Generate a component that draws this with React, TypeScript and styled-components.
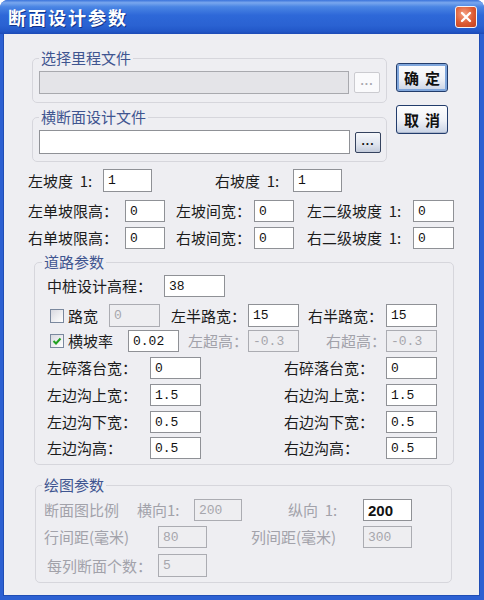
import React from "react";
import styled, { createGlobalStyle } from "styled-components";

const GlobalStyle = createGlobalStyle`
  html, body {
    margin: 0;
    padding: 0;
    background: #ffffff;
  }
  body {
    font-family: "Noto Sans CJK SC", "Noto Sans", sans-serif;
  }
`;

const Window = styled.div`
  width: 484px;
  height: 600px;
  display: flex;
  flex-direction: column;
  background: #2c60d2;
  border-radius: 8px 8px 0 0;
  overflow: hidden;
`;

const TitleBar = styled.div`
  height: 34px;
  flex: none;
  display: flex;
  align-items: center;
  justify-content: space-between;
  padding: 0 7px 0 8px;
  background: linear-gradient(
    180deg,
    #3a73db 0%,
    #79a7ee 8%,
    #4a85e4 20%,
    #2e68d8 45%,
    #2a62d2 75%,
    #2257c8 92%,
    #1c4ab6 100%
  );
`;

const Title = styled.div`
  color: #ffffff;
  font-size: 18px;
  font-weight: bold;
  letter-spacing: 2px;
  text-shadow: 1px 1px 0 #13348a;
`;

const CloseButton = styled.div`
  width: 22px;
  height: 22px;
  box-sizing: border-box;
  border: 1px solid #f4f4f8;
  border-radius: 3px;
  background: radial-gradient(circle at 40% 35%, #f5a183, #dc5a32 55%, #c2401e);
  display: flex;
  align-items: center;
  justify-content: center;
`;

const Body = styled.div`
  flex: 1;
  margin: 0 4px 4px 3px;
  border: 1px solid #1f4db5;
  border-top: none;
  background: #eeeef2;
  padding-top: 16px;
`;

const TopSection = styled.div`
  display: flex;
  padding-left: 28px;
`;

const FileColumn = styled.div`
  width: 355px;
  display: flex;
  flex-direction: column;
`;

const ButtonColumn = styled.div`
  margin-left: 9px;
  padding-top: 13px;
  display: flex;
  flex-direction: column;
  gap: 13px;
`;

const Group = styled.fieldset<{ $w?: number; $ml?: number; $mt?: number }>`
  margin: ${(p) => p.$mt ?? 0}px 0 0 ${(p) => p.$ml ?? 0}px;
  padding: 0;
  width: ${(p) => (p.$w ? `${p.$w}px` : "auto")};
  box-sizing: border-box;
  min-inline-size: 0;
  border: 1px solid #d6d6dc;
  border-radius: 5px;
`;

const Legend = styled.legend<{ $ml: number }>`
  margin-left: ${(p) => p.$ml}px;
  padding: 0 2px;
  font-size: 15px;
  line-height: 16px;
  color: #3f5590;
`;

const GroupBody = styled.div<{ $pad: string }>`
  padding: ${(p) => p.$pad};
`;

const Row = styled.div<{ $mt?: number }>`
  display: flex;
  align-items: center;
  margin-top: ${(p) => p.$mt ?? 0}px;
`;

const OuterRows = styled.div`
  padding-left: 24px;
`;

const Lbl = styled.span<{ $w: number; $ml?: number; $dim?: boolean }>`
  flex: none;
  width: ${(p) => p.$w}px;
  margin-left: ${(p) => p.$ml ?? 0}px;
  font-size: 15px;
  line-height: 22px;
  white-space: pre;
  color: ${(p) => (p.$dim ? "#a2a2aa" : "#1c1c1c")};
`;

const Input = styled.input<{ $w: number; $h?: number; $sans?: boolean }>`
  flex: none;
  box-sizing: border-box;
  width: ${(p) => p.$w}px;
  height: ${(p) => p.$h ?? 22}px;
  margin: 0;
  padding: 0 0 0 4px;
  border: 1px solid #8f9196;
  border-radius: 0;
  background: #ffffff;
  color: #111111;
  font-family: ${(p) => (p.$sans ? '"Liberation Sans", Arial, sans-serif' : '"Liberation Mono", monospace')};
  font-size: ${(p) => (p.$sans ? 15 : 13)}px;
  font-weight: ${(p) => (p.$sans ? "bold" : "normal")};
  outline: none;

  &:disabled {
    background: #eeeef1;
    border-color: #abacb2;
    color: #a6a6ac;
  }
`;

const PathInput = styled(Input)`
  &:disabled {
    background: #e4e4e8;
    border-color: #a8a9ae;
  }
`;

const Browse = styled.button<{ $on?: boolean }>`
  flex: none;
  width: 26px;
  height: 21px;
  margin-left: 5px;
  padding: 0 0 5px;
  box-sizing: border-box;
  border: 1px solid ${(p) => (p.$on ? "#34425e" : "#cbcbd0")};
  border-radius: 2px;
  background: ${(p) => (p.$on ? "linear-gradient(180deg, #f6f7fa, #dfe4ee 60%, #c3cbdb)" : "#fafafc")};
  color: ${(p) => (p.$on ? "#111111" : "#a8a8ae")};
  font-family: "Liberation Sans", Arial, sans-serif;
  font-size: 12px;
  font-weight: bold;
  letter-spacing: 1px;
  line-height: 1;
  display: flex;
  align-items: flex-end;
  justify-content: center;
`;

const DialogButton = styled.button<{ $default?: boolean }>`
  width: 52px;
  height: 29px;
  padding: 0 0 0 6px;
  box-sizing: border-box;
  border: 1px solid #223c6c;
  border-radius: 3px;
  background: linear-gradient(180deg, #fdfdfe, #eef1f7 55%, #c8d2e5);
  box-shadow: ${(p) => (p.$default ? "inset 0 0 0 2px #7fa6dc" : "inset 0 -1px 0 #aab6cc")};
  color: #111111;
  font-family: "Noto Sans CJK SC", sans-serif;
  font-size: 15px;
  font-weight: bold;
  letter-spacing: 6px;
  cursor: pointer;
`;

const CheckLabel = styled.label<{ $w: number }>`
  flex: none;
  width: ${(p) => p.$w}px;
  display: flex;
  align-items: center;
  font-size: 15px;
  line-height: 22px;
  color: #1c1c1c;
`;

const CheckBox = styled.span`
  width: 14px;
  height: 14px;
  box-sizing: border-box;
  margin: 0 4px 0 3px;
  border: 1px solid #7a889e;
  background: linear-gradient(135deg, #d8d9e0, #ffffff);
  display: flex;
  align-items: center;
  justify-content: center;
`;

const Check = ({ on }: { on?: boolean }) => (
  <CheckBox>
    {on && (
      <svg width="10" height="10" viewBox="0 0 10 10">
        <path d="M1.5 5 L4 7.5 L8.5 2.5" fill="none" stroke="#21a121" strokeWidth="2" />
      </svg>
    )}
  </CheckBox>
);

export default function App() {
  return (
    <>
      <GlobalStyle />
      <Window>
        <TitleBar>
          <Title>断面设计参数</Title>
          <CloseButton>
            <svg width="12" height="12" viewBox="0 0 12 12">
              <path d="M2 2 L10 10 M10 2 L2 10" stroke="#ffffff" strokeWidth="2.4" strokeLinecap="round" />
            </svg>
          </CloseButton>
        </TitleBar>
        <Body>
          <TopSection>
            <FileColumn>
              <Group>
                <Legend $ml={6}>选择里程文件</Legend>
                <GroupBody $pad="5px 0 8px 6px">
                  <Row>
                    <PathInput $w={310} $h={23} disabled />
                    <Browse disabled>...</Browse>
                  </Row>
                </GroupBody>
              </Group>
              <Group $mt={6}>
                <Legend $ml={6}>横断面设计文件</Legend>
                <GroupBody $pad="5px 0 7px 6px">
                  <Row>
                    <Input $w={311} $h={24} defaultValue="" />
                    <Browse $on>...</Browse>
                  </Row>
                </GroupBody>
              </Group>
            </FileColumn>
            <ButtonColumn>
              <DialogButton $default>确定</DialogButton>
              <DialogButton>取消</DialogButton>
            </ButtonColumn>
          </TopSection>

          <OuterRows>
            <Row $mt={7}>
              <Lbl $w={75}>左坡度  1:</Lbl>
              <Input $w={49} $h={23} defaultValue="1" />
              <Lbl $w={78} $ml={63}>右坡度  1:</Lbl>
              <Input $w={49} $h={23} defaultValue="1" />
            </Row>
            <Row $mt={8}>
              <Lbl $w={97}>左单坡限高：</Lbl>
              <Input $w={40} defaultValue="0" />
              <Lbl $w={78} $ml={11}>左坡间宽：</Lbl>
              <Input $w={40} defaultValue="0" />
              <Lbl $w={106} $ml={13}>左二级坡度  1:</Lbl>
              <Input $w={41} defaultValue="0" />
            </Row>
            <Row $mt={5}>
              <Lbl $w={97}>右单坡限高：</Lbl>
              <Input $w={40} defaultValue="0" />
              <Lbl $w={78} $ml={11}>右坡间宽：</Lbl>
              <Input $w={40} defaultValue="0" />
              <Lbl $w={106} $ml={13}>右二级坡度  1:</Lbl>
              <Input $w={41} defaultValue="0" />
            </Row>
          </OuterRows>

          <Group $w={420} $ml={30} $mt={5}>
            <Legend $ml={7}>道路参数</Legend>
            <GroupBody $pad="5px 0 5px 12px">
              <Row>
                <Lbl $w={117}>中桩设计高程：</Lbl>
                <Input $w={61} defaultValue="38" />
              </Row>
              <Row $mt={7}>
                <CheckLabel $w={62}>
                  <Check />
                  路宽
                </CheckLabel>
                <Input $w={51} $h={23} disabled defaultValue="0" />
                <Lbl $w={77} $ml={11}>左半路宽：</Lbl>
                <Input $w={51} $h={23} defaultValue="15" />
                <Lbl $w={78} $ml={9}>右半路宽：</Lbl>
                <Input $w={51} $h={23} defaultValue="15" />
              </Row>
              <Row $mt={3}>
                <CheckLabel $w={81}>
                  <Check on />
                  横坡率
                </CheckLabel>
                <Input $w={51} defaultValue="0.02" />
                <Lbl $w={60} $ml={9} $dim>左超高：</Lbl>
                <Input $w={51} disabled defaultValue="-0.3" />
                <Lbl $w={60} $ml={27} $dim>右超高：</Lbl>
                <Input $w={51} disabled defaultValue="-0.3" />
              </Row>
              <Row $mt={5}>
                <Lbl $w={103}>左碎落台宽：</Lbl>
                <Input $w={51} defaultValue="0" />
                <Lbl $w={102} $ml={83}>右碎落台宽：</Lbl>
                <Input $w={51} defaultValue="0" />
              </Row>
              <Row $mt={5}>
                <Lbl $w={103}>左边沟上宽：</Lbl>
                <Input $w={51} defaultValue="1.5" />
                <Lbl $w={102} $ml={83}>右边沟上宽：</Lbl>
                <Input $w={51} defaultValue="1.5" />
              </Row>
              <Row $mt={5}>
                <Lbl $w={103}>左边沟下宽：</Lbl>
                <Input $w={51} defaultValue="0.5" />
                <Lbl $w={102} $ml={83}>右边沟下宽：</Lbl>
                <Input $w={51} defaultValue="0.5" />
              </Row>
              <Row $mt={4}>
                <Lbl $w={103}>左边沟高：</Lbl>
                <Input $w={51} defaultValue="0.5" />
                <Lbl $w={102} $ml={83}>右边沟高：</Lbl>
                <Input $w={51} defaultValue="0.5" />
              </Row>
            </GroupBody>
          </Group>

          <Group $w={417} $ml={31} $mt={12}>
            <Legend $ml={6}>绘图参数</Legend>
            <GroupBody $pad="6px 0 5px 8px">
              <Row>
                <Lbl $w={93} $dim>断面图比例</Lbl>
                <Lbl $w={57} $dim>横向1:</Lbl>
                <Input $w={48} disabled defaultValue="200" />
                <Lbl $w={75} $ml={46} $dim>纵向  1:</Lbl>
                <Input $w={49} $sans defaultValue="200" />
              </Row>
              <Row $mt={5}>
                <Lbl $w={114} $dim>行间距(毫米)</Lbl>
                <Input $w={49} disabled defaultValue="80" />
                <Lbl $w={112} $ml={44} $dim>列间距(毫米)</Lbl>
                <Input $w={49} disabled defaultValue="300" />
              </Row>
              <Row $mt={6}>
                <Lbl $w={111} $ml={3} $dim>每列断面个数：</Lbl>
                <Input $w={49} $h={23} disabled defaultValue="5" />
              </Row>
            </GroupBody>
          </Group>
        </Body>
      </Window>
    </>
  );
}
